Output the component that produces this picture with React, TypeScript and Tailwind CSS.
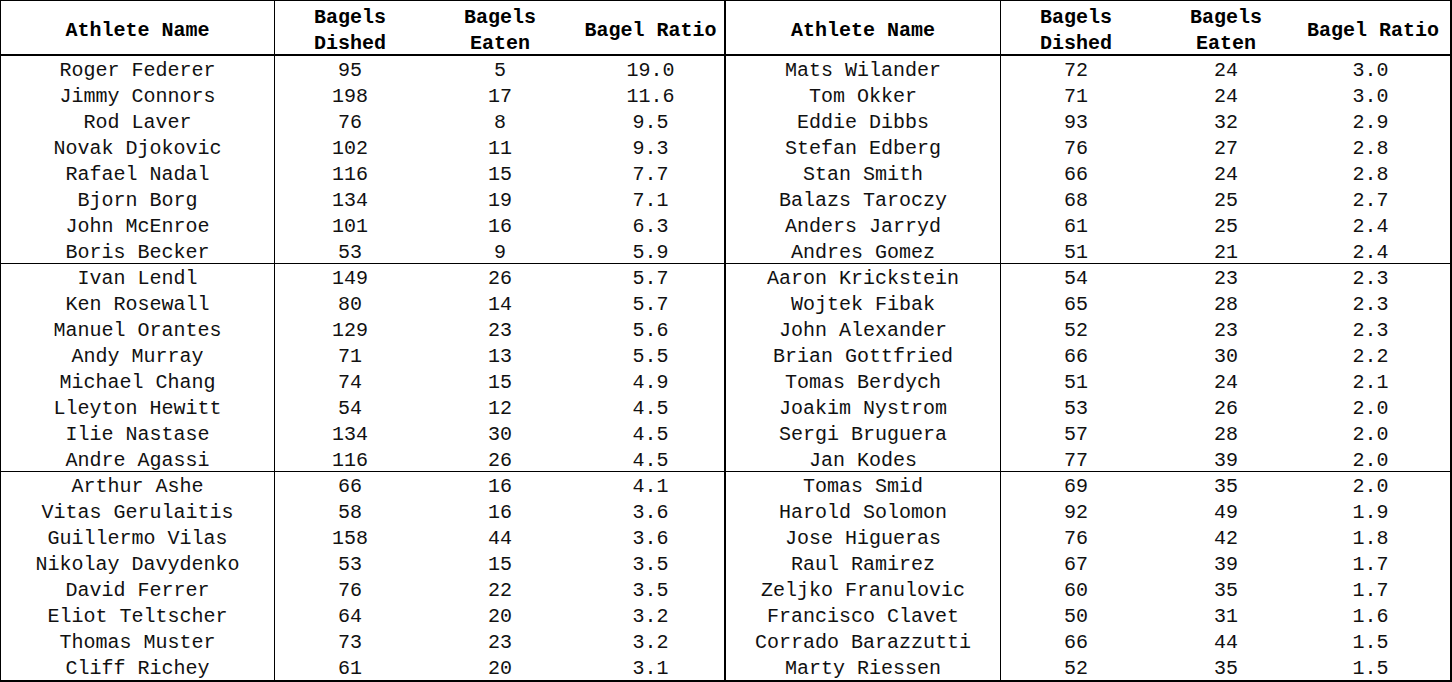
import React from "react";

type Row = [string, number, number, string];

const left: Row[] = [
  ["Roger Federer", 95, 5, "19.0"],
  ["Jimmy Connors", 198, 17, "11.6"],
  ["Rod Laver", 76, 8, "9.5"],
  ["Novak Djokovic", 102, 11, "9.3"],
  ["Rafael Nadal", 116, 15, "7.7"],
  ["Bjorn Borg", 134, 19, "7.1"],
  ["John McEnroe", 101, 16, "6.3"],
  ["Boris Becker", 53, 9, "5.9"],
  ["Ivan Lendl", 149, 26, "5.7"],
  ["Ken Rosewall", 80, 14, "5.7"],
  ["Manuel Orantes", 129, 23, "5.6"],
  ["Andy Murray", 71, 13, "5.5"],
  ["Michael Chang", 74, 15, "4.9"],
  ["Lleyton Hewitt", 54, 12, "4.5"],
  ["Ilie Nastase", 134, 30, "4.5"],
  ["Andre Agassi", 116, 26, "4.5"],
  ["Arthur Ashe", 66, 16, "4.1"],
  ["Vitas Gerulaitis", 58, 16, "3.6"],
  ["Guillermo Vilas", 158, 44, "3.6"],
  ["Nikolay Davydenko", 53, 15, "3.5"],
  ["David Ferrer", 76, 22, "3.5"],
  ["Eliot Teltscher", 64, 20, "3.2"],
  ["Thomas Muster", 73, 23, "3.2"],
  ["Cliff Richey", 61, 20, "3.1"],
];

const right: Row[] = [
  ["Mats Wilander", 72, 24, "3.0"],
  ["Tom Okker", 71, 24, "3.0"],
  ["Eddie Dibbs", 93, 32, "2.9"],
  ["Stefan Edberg", 76, 27, "2.8"],
  ["Stan Smith", 66, 24, "2.8"],
  ["Balazs Taroczy", 68, 25, "2.7"],
  ["Anders Jarryd", 61, 25, "2.4"],
  ["Andres Gomez", 51, 21, "2.4"],
  ["Aaron Krickstein", 54, 23, "2.3"],
  ["Wojtek Fibak", 65, 28, "2.3"],
  ["John Alexander", 52, 23, "2.3"],
  ["Brian Gottfried", 66, 30, "2.2"],
  ["Tomas Berdych", 51, 24, "2.1"],
  ["Joakim Nystrom", 53, 26, "2.0"],
  ["Sergi Bruguera", 57, 28, "2.0"],
  ["Jan Kodes", 77, 39, "2.0"],
  ["Tomas Smid", 69, 35, "2.0"],
  ["Harold Solomon", 92, 49, "1.9"],
  ["Jose Higueras", 76, 42, "1.8"],
  ["Raul Ramirez", 67, 39, "1.7"],
  ["Zeljko Franulovic", 60, 35, "1.7"],
  ["Francisco Clavet", 50, 31, "1.6"],
  ["Corrado Barazzutti", 66, 44, "1.5"],
  ["Marty Riessen", 52, 35, "1.5"],
];

const cell = "h-[26px] box-border pt-[4px] flex items-center justify-center";

export default function App() {
  const rows = left.map((l, i) => [l, right[i]] as const);
  return (
    <div
      className="w-[1452px] h-[682px] box-border border-t border-l border-r-2 border-b-2 border-black bg-white text-[#111] text-[20px] leading-[26px] overflow-hidden"
      style={{ fontFamily: '"Liberation Mono", "Courier New", monospace' }}
    >
      <div className="grid grid-cols-[274px_150px_150px_151px_275px_150px_150px_149px] h-[55px] border-b-2 border-black font-bold text-black">
        <div className="flex items-center justify-center pt-[4px] border-r border-black">Athlete Name</div>
        <div className="flex flex-col items-center justify-center pt-[4px]">
          <span>Bagels</span>
          <span>Dished</span>
        </div>
        <div className="flex flex-col items-center justify-center pt-[4px]">
          <span>Bagels</span>
          <span>Eaten</span>
        </div>
        <div className="flex items-center justify-center pt-[4px]">Bagel Ratio</div>
        <div className="flex items-center justify-center pt-[4px] border-r border-black border-l-2 -ml-[2px]">Athlete Name</div>
        <div className="flex flex-col items-center justify-center pt-[4px]">
          <span>Bagels</span>
          <span>Dished</span>
        </div>
        <div className="flex flex-col items-center justify-center pt-[4px]">
          <span>Bagels</span>
          <span>Eaten</span>
        </div>
        <div className="flex items-center justify-center pt-[4px] pr-[5px]">Bagel Ratio</div>
      </div>
      <div className="grid grid-cols-[274px_150px_150px_151px_275px_150px_150px_149px]">
        {rows.map(([l, r], i) => {
          const sep = i === 7 || i === 15 ? "border-b border-black" : "";
          return (
            <React.Fragment key={i}>
              <div className={`${cell} border-r border-black ${sep}`}>{l[0]}</div>
              <div className={`${cell} ${sep}`}>{l[1]}</div>
              <div className={`${cell} ${sep}`}>{l[2]}</div>
              <div className={`${cell} ${sep}`}>{l[3]}</div>
              <div className={`${cell} border-l-2 -ml-[2px] border-r border-black ${sep}`}>{r[0]}</div>
              <div className={`${cell} ${sep}`}>{r[1]}</div>
              <div className={`${cell} ${sep}`}>{r[2]}</div>
              <div className={`${cell} pr-[10px] ${sep}`}>{r[3]}</div>
            </React.Fragment>
          );
        })}
      </div>
    </div>
  );
}
